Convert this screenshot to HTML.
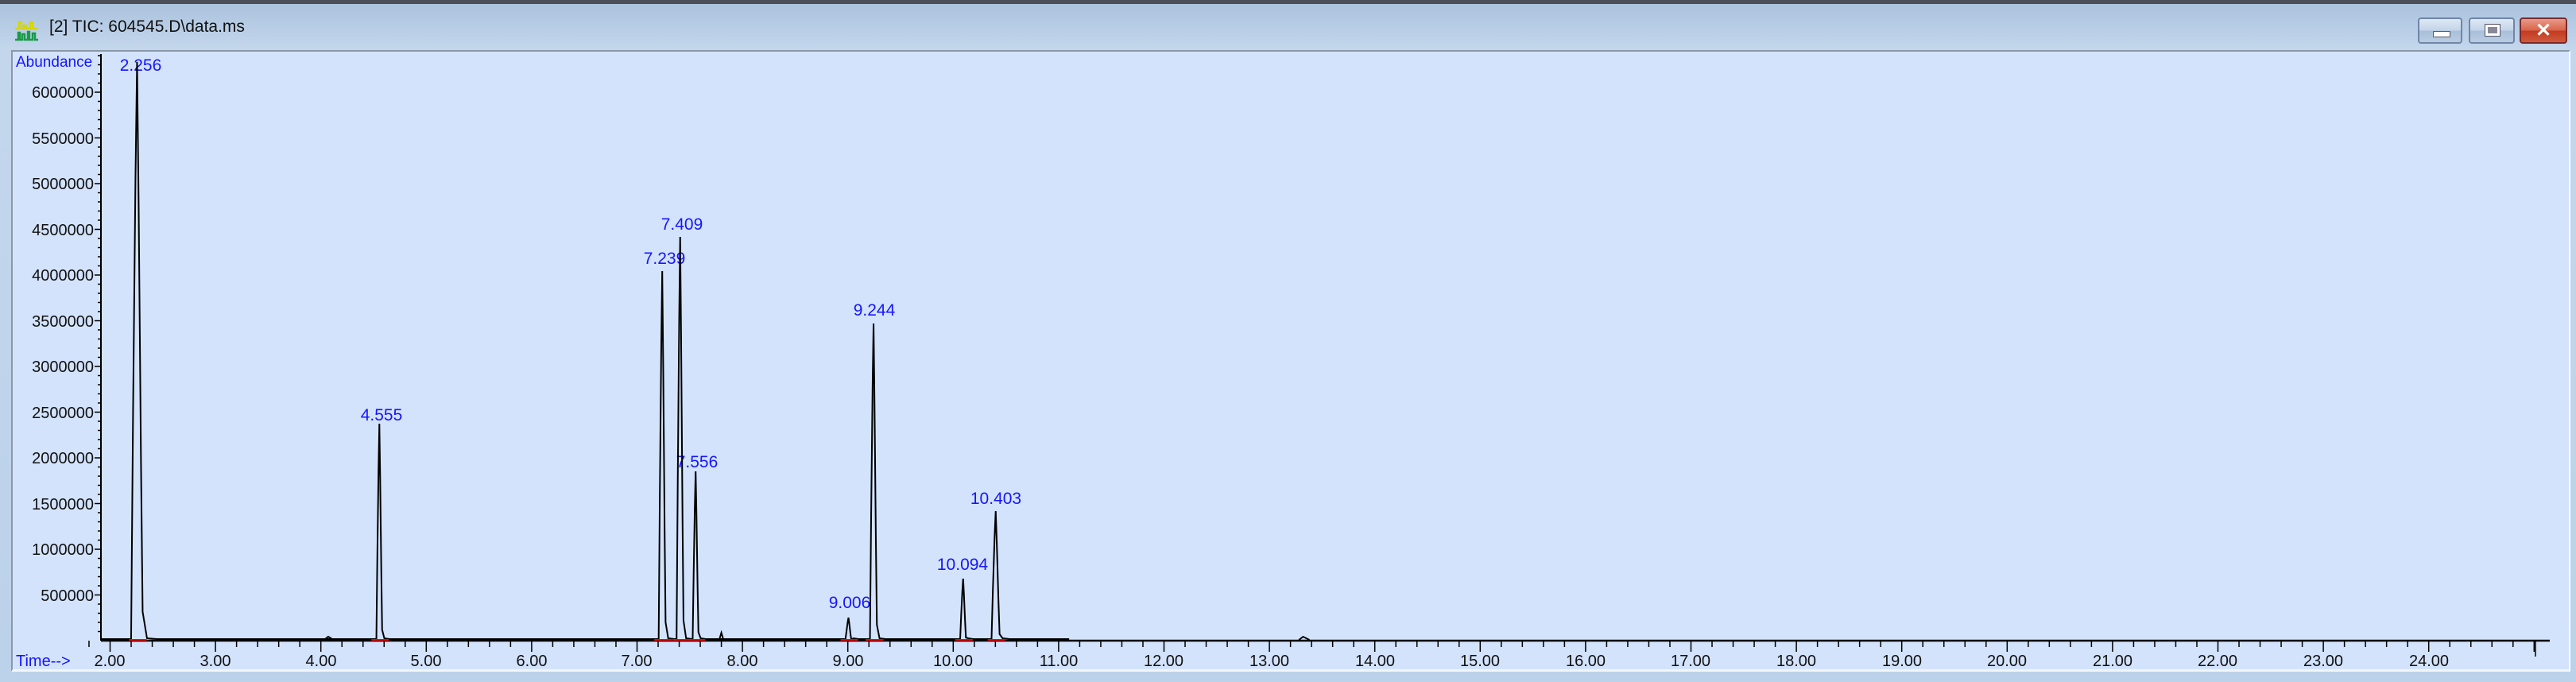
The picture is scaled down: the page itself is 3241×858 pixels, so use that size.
<!DOCTYPE html>
<html><head><meta charset="utf-8">
<style>
html,body{margin:0;padding:0;width:3241px;height:858px;overflow:hidden;background:#bcd2ea;font-family:"Liberation Sans",sans-serif;}
#win{position:absolute;left:0;top:0;width:3241px;height:858px;background:linear-gradient(#a9c1dc,#c3d6ec 60px,#bcd2ea);}
#topline{position:absolute;left:0;top:0;width:3241px;height:5px;background:#4a4f58;}
#title{position:absolute;left:62px;top:22px;font-size:21px;color:#111;}
.btn{position:absolute;top:22px;height:33px;border:2px solid #6f86a6;border-radius:4px;background:linear-gradient(#dfe9f5,#c3d4e8 50%,#a9bfd9 51%,#b9cce3);box-sizing:border-box;}
#plot{position:absolute;left:14px;top:63px;width:3220px;height:782px;background:#d3e3fc;border-top:2px solid #8a98a8;border-left:2px solid #8a98a8;border-right:2px solid #fff;border-bottom:3px solid #f2f6fb;box-sizing:border-box;}
svg text{font-family:"Liberation Sans",sans-serif;}
</style></head><body>
<div id="win">
<div id="topline"></div>
<svg style="position:absolute;left:18px;top:24px" width="32" height="30" viewBox="0 0 32 30">
<path d="M1 12 H6 V4 H9 V12 H12 V8 H15 V12 H20 V4 H23 V12 H30" stroke="#d6d600" stroke-width="2.5" fill="none"/>
<path d="M1 26 H5 V17 H7 V26 H10 V19 H13 V26 H17 V16 H19 V26 H23 V18 H26 V26 H30" stroke="#1a9a4a" stroke-width="2.5" fill="none"/>
</svg>
<div id="title">[2] TIC: 604545.D\data.ms</div>
<div class="btn" style="left:3042px;width:56px"><div style="position:absolute;left:17px;top:15px;width:20px;height:6px;background:#fff;border:1px solid #556;border-radius:1px"></div></div>
<div class="btn" style="left:3106px;width:58px"><div style="position:absolute;left:19px;top:7px;width:18px;height:14px;border:3px solid #fff;outline:1px solid #556;box-sizing:border-box;background:#889"></div></div>
<div class="btn" style="left:3170px;width:60px;border-color:#7a2a2a;background:linear-gradient(#e99a88,#d8624a 50%,#c23a20 51%,#d05a3c)"><div style="position:absolute;left:0;width:56px;top:1px;text-align:center;color:#fff;font-weight:bold;font-size:24px;line-height:28px">✕</div></div>
<div id="plot"></div>
<svg id="g" style="position:absolute;left:0;top:0" width="3241" height="858">
<g font-size="20" fill="#111" text-anchor="end">
<text x="118" y="123">6000000</text>
<text x="118" y="181">5500000</text>
<text x="118" y="238">5000000</text>
<text x="118" y="296">4500000</text>
<text x="118" y="353">4000000</text>
<text x="118" y="411">3500000</text>
<text x="118" y="468">3000000</text>
<text x="118" y="526">2500000</text>
<text x="118" y="583">2000000</text>
<text x="118" y="641">1500000</text>
<text x="118" y="698">1000000</text>
<text x="118" y="756">500000</text>
</g>
<text x="20" y="84" font-size="19" fill="#1515ff">Abundance</text>
<text x="20" y="838" font-size="20" fill="#1515ff">Time--&gt;</text>
<g font-size="20" fill="#111" text-anchor="middle">
<text x="138" y="838">2.00</text><text x="271" y="838">3.00</text><text x="404" y="838">4.00</text><text x="536" y="838">5.00</text><text x="669" y="838">6.00</text><text x="801" y="838">7.00</text><text x="934" y="838">8.00</text><text x="1067" y="838">9.00</text><text x="1199" y="838">10.00</text><text x="1332" y="838">11.00</text><text x="1464" y="838">12.00</text><text x="1597" y="838">13.00</text><text x="1730" y="838">14.00</text><text x="1862" y="838">15.00</text><text x="1995" y="838">16.00</text><text x="2127" y="838">17.00</text><text x="2260" y="838">18.00</text><text x="2393" y="838">19.00</text><text x="2525" y="838">20.00</text><text x="2658" y="838">21.00</text><text x="2790" y="838">22.00</text><text x="2923" y="838">23.00</text><text x="3056" y="838">24.00</text>
</g>
<g font-size="21" fill="#1515ff" text-anchor="middle">
<text x="177" y="89">2.256</text>
<text x="480" y="529">4.555</text>
<text x="836" y="332">7.239</text>
<text x="858" y="289">7.409</text>
<text x="877" y="588">7.556</text>
<text x="1069" y="765">9.006</text>
<text x="1100" y="397">9.244</text>
<text x="1211" y="717">10.094</text>
<text x="1253" y="634">10.403</text>
</g>
<g id="ax"></g>
</svg>
</div>
<script>
var g=document.getElementById("ax"),s="";
function X(t){return 138.5+(t-2)*132.6}
var B=806;
s+='<line x1="127" y1="68" x2="127" y2="'+B+'" stroke="#000" stroke-width="2"/>';
s+='<line x1="127" y1="'+B+'" x2="3208" y2="'+B+'" stroke="#000" stroke-width="2.5"/>';
for(var i=1;i<=64;i++){var y=B-i*11.5;var L=(i%5==0)?8:4;s+='<line x1="'+(127-L)+'" y1="'+y+'" x2="127" y2="'+y+'" stroke="#000" stroke-width="1.5"/>';}
for(var t=1.8;t<=25.05;t+=0.2){var x=X(t);var m=Math.abs(t-Math.round(t))<0.01;s+='<line x1="'+x+'" y1="'+B+'" x2="'+x+'" y2="'+(B+(m?14:8))+'" stroke="#000" stroke-width="1.5"/>';}
s+='<line x1="3190" y1="'+B+'" x2="3190" y2="'+(B+20)+'" stroke="#000" stroke-width="1.5"/>';
var pk=[[2.256,78,5],[4.555,533,2.5],[7.239,341,3],[7.409,298,3],[7.556,593,2.5],[9.006,777,2.5],[9.244,407,3],[10.094,728,2.5],[10.403,643,3.5]];
var d="M128 "+(B-2);
pk.forEach(function(p){var x=X(p[0]),w=p[2],h=B-p[1];
d+=" L"+(x-w*1.5)+" "+(B-2)+" L"+(x-w)+" "+(B-h*0.4)+" L"+(x-w*0.4)+" "+(B-h*0.8)+" L"+x+" "+p[1]+" L"+(x+w*0.4)+" "+(B-h*0.75)+" L"+(x+w)+" "+(B-h*0.3)+" L"+(x+w*1.4)+" "+(B-h*0.05)+" L"+(x+w*2.5)+" "+(B-3)+" L"+(x+w*5)+" "+(B-2);});
d+=" L"+X(11.1)+" "+(B-2);
s+='<path d="'+d+'" stroke="#000" stroke-width="2" fill="none"/>';
s+='<path d="M'+X(4.03)+' '+(B-1)+' L'+X(4.07)+' '+(B-5)+' L'+X(4.12)+' '+(B-1)+' M'+X(13.28)+' '+(B-1)+' L'+X(13.32)+' '+(B-5)+' L'+X(13.38)+' '+(B-1)+' M'+X(7.78)+' '+(B-1)+' L'+X(7.8)+' '+(B-10)+' L'+X(7.82)+' '+(B-1)+'" stroke="#000" stroke-width="2" fill="none"/>';
pk.forEach(function(p){var x=X(p[0]);s+='<line x1="'+(x-10)+'" y1="'+(B-1)+'" x2="'+(x+12)+'" y2="'+(B-1)+'" stroke="#f00" stroke-width="2"/>';});
g.innerHTML=s;
</script>
</body></html>
